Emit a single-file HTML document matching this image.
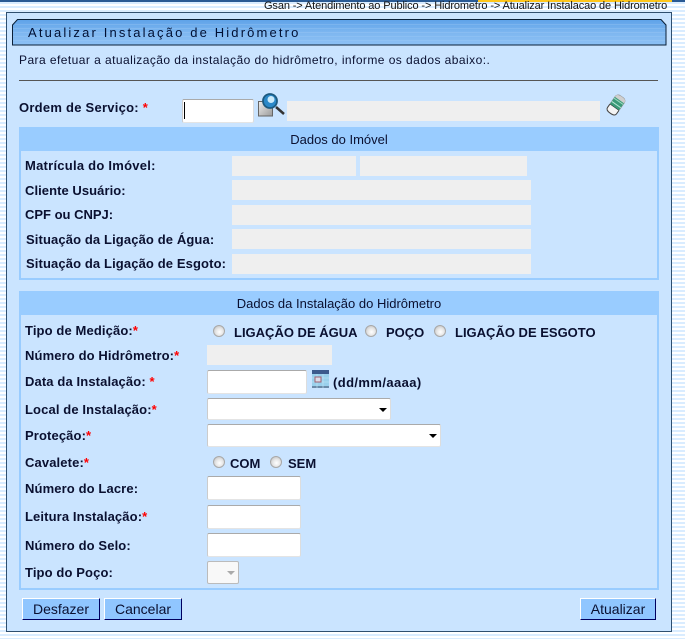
<!DOCTYPE html>
<html><head><meta charset="utf-8"><style>
html,body{margin:0;padding:0}
body{width:685px;height:639px;overflow:hidden;position:relative;background:repeating-linear-gradient(180deg,#fff 0,#fff 2px,#d9ecff 2px,#d9ecff 4px);font-family:"Liberation Sans",Arial,sans-serif;color:#001133}
div,span.t,svg{position:absolute}
.t{white-space:nowrap;font-size:13px;line-height:14px;font-weight:bold;color:#0a1030;margin-top:1px;letter-spacing:.12px}
.n{font-weight:normal}
.r{color:#f00}
.ro{background:#efefef;height:20px}
.in{background:#fff;box-sizing:border-box;border-top:1px solid #aaa;border-left:1px solid #ccc;border-right:1px solid #ddd;border-bottom:1px solid #e4e4e4;border-radius:2px}
.sec{left:19px;width:640px;box-sizing:border-box;border:2px solid #99ccff;border-top:0}
.hd{left:19px;width:640px;height:24px;background:#99ccff;text-align:center;font-size:13px;line-height:25px;color:#0a1030}
.rad{width:12px;height:12px;border-radius:50%;box-sizing:border-box;border:1px solid #a8a8a8;background:radial-gradient(circle at 55% 60%,#fff 0,#e6e6e6 45%,#b8b8b8 100%)}
.btn{height:22px;box-sizing:border-box;background:#90c6ff;border-top:1px solid #fff;border-left:1px solid #fff;border-right:1px solid #000060;border-bottom:1px solid #000060;text-align:center;font-size:14px;line-height:20px;color:#0a1030}
.arr{width:0;height:0;border-left:4px solid transparent;border-right:4px solid transparent;border-top:4px solid #000}
.u{letter-spacing:0}
</style></head><body>
<div style="left:0;top:0;width:685px;height:2px;background:#2a5a94"></div>
<div style="left:478px;top:0;width:194px;height:2px;background:#ffc61a"></div>
<span class="t n" style="left:264px;top:-2px;font-size:11px;letter-spacing:-.12px;color:#111">Gsan -&gt; Atendimento ao Publico -&gt; Hidrometro -&gt; Atualizar Instalacao de Hidrometro</span>

<div style="left:6px;top:12px;width:666px;height:620px;box-sizing:border-box;background:#cae4ff;border:1px solid #2f4f6f"></div>

<svg style="left:12px;top:19px" width="655" height="27" viewBox="0 0 655 27">
<defs><linearGradient id="g" x1="0" y1="0" x2="0" y2="1"><stop offset="0" stop-color="#5ea2e8"/><stop offset=".5" stop-color="#7db6f0"/><stop offset="1" stop-color="#8cc0f4"/></linearGradient></defs>
<path d="M.5 26V6L5.500.5H649L654 6V26Z" fill="url(#g)"/>
<path d="M3 5.500H652M1 9.500H654M1 13.500H654M1 17.500H654M1 21.500H654" stroke="#a8d0f8" stroke-opacity=".28"/>
<path d="M.5 26V6L5.500.5H649L654 6V26Z" fill="none" stroke="#0a2038" stroke-width="1"/>
</svg>
<span class="t n" style="left:28px;top:25px;font-size:13px;letter-spacing:2.15px;color:#001033">Atualizar Instalação de Hidrômetro</span>
<span class="t n" style="left:19px;top:52px;font-size:12px;letter-spacing:.44px;color:#0a1030">Para efetuar a atualização da instalação do hidrômetro, informe os dados abaixo:.</span>
<div style="left:19px;top:80px;width:639px;height:1px;background:#555"></div>

<span class="t" style="left:19px;top:100px;letter-spacing:.25px">Ordem de Serviço: <span class="r">*</span></span>
<div class="in" style="left:182px;top:99px;width:72px;height:24px"></div>
<div style="left:184px;top:102px;width:1px;height:17px;background:#000"></div>
<svg style="left:257px;top:92px" width="29" height="26" viewBox="0 0 29 26">
<defs><linearGradient id="p" x1="0" y1="0" x2="1" y2="1"><stop offset="0" stop-color="#eee"/><stop offset="1" stop-color="#999"/></linearGradient></defs>
<rect x="1.500" y="9.500" width="14" height="14.500" fill="url(#p)" stroke="#666"/>
<path d="M19 15L27 22" stroke="#333" stroke-width="2.500"/>
<circle cx="13" cy="9" r="7" fill="#2a88c8" stroke="#1c5a80" stroke-width="1.800"/>
<circle cx="14" cy="7.500" r="3.500" fill="#cbeafa"/>
</svg>
<div class="ro" style="left:287px;top:101px;width:313px"></div>
<svg style="left:604px;top:92px" width="24" height="26" viewBox="0 0 24 26">
<g transform="rotate(35 12 13)">
<rect x="6.500" y="3" width="11" height="20" rx="3.500" fill="#fff" stroke="#999"/>
<path d="M6.500 6C6.500 4 8 3 12 3C16 3 17.500 4 17.500 6V8H6.500Z" fill="#cfcfcf"/>
<rect x="6.500" y="7" width="11" height="9" fill="#3a9a78"/>
<path d="M6.500 8.500H17.500" stroke="#9ed8c0"/>
<path d="M6.500 12.500H17.500" stroke="#b8e8d4"/>
<path d="M6.500 16H17.500" stroke="#222"/>
<path d="M6.500 16V20C6.500 22 8 23 12 23C16 23 17.500 22 17.500 20V16" fill="#f4f4f4" stroke="#444"/>
</g>
</svg>

<div class="sec" style="top:151px;height:129px"></div>
<div class="hd" style="top:127px">Dados do Imóvel</div>
<span class="t" style="left:25px;top:158px;letter-spacing:.25px">Matrícula do Imóvel:</span>
<span class="t" style="left:25px;top:183px;letter-spacing:.06px">Cliente Usuário:</span>
<span class="t" style="left:25px;top:207px;letter-spacing:0">CPF ou CNPJ:</span>
<span class="t" style="left:26px;top:232px">Situação da Ligação de Água:</span>
<span class="t" style="left:26px;top:256px">Situação da Ligação de Esgoto:</span>
<div class="ro" style="left:232px;top:156px;width:124px"></div>
<div class="ro" style="left:360px;top:156px;width:167px"></div>
<div class="ro" style="left:232px;top:180px;width:299px"></div>
<div class="ro" style="left:232px;top:205px;width:299px"></div>
<div class="ro" style="left:232px;top:229px;width:299px"></div>
<div class="ro" style="left:232px;top:254px;width:299px"></div>

<div class="sec" style="top:315px;height:275px"></div>
<div class="hd" style="top:291px">Dados da Instalação do Hidrômetro</div>
<span class="t" style="left:25px;top:323px">Tipo de Medição:<span class="r">*</span></span>
<div class="rad" style="left:213px;top:325px"></div>
<span class="t u" style="left:234px;top:325px">LIGAÇÃO DE ÁGUA</span>
<div class="rad" style="left:365px;top:325px"></div>
<span class="t u" style="left:386px;top:325px">POÇO</span>
<div class="rad" style="left:434px;top:325px"></div>
<span class="t u" style="left:455px;top:325px">LIGAÇÃO DE ESGOTO</span>

<span class="t" style="left:25px;top:348px">Número do Hidrômetro:<span class="r">*</span></span>
<div class="ro" style="left:207px;top:345px;width:125px"></div>

<span class="t" style="left:25px;top:374px">Data da Instalação: <span class="r">*</span></span>
<div class="in" style="left:207px;top:370px;width:100px;height:24px"></div>
<svg style="left:312px;top:370px" width="17" height="18" viewBox="0 0 17 18">
<rect width="17" height="18" fill="#9ad0ec"/>
<rect width="17" height="4" fill="#3c5a8c"/>
<rect y="16" width="17" height="2" fill="#6a8aa8"/>
<path d="M0 8H17M0 12H17M5 4V18M11 4V18" stroke="#c4e6f6" stroke-width=".6"/>
<rect x="3" y="7" width="6" height="5" fill="#dcdce8" stroke="#a06070"/>
</svg>
<span class="t" style="left:333px;top:375px;font-size:13px;letter-spacing:.4px">(dd/mm/aaaa)</span>

<span class="t" style="left:25px;top:402px">Local de Instalação:<span class="r">*</span></span>
<div class="in" style="left:207px;top:398px;width:184px;height:22px"></div>
<div class="arr" style="left:379px;top:408px"></div>

<span class="t" style="left:25px;top:428px">Proteção:<span class="r">*</span></span>
<div class="in" style="left:207px;top:424px;width:234px;height:23px"></div>
<div class="arr" style="left:429px;top:434px"></div>

<span class="t" style="left:25px;top:455px">Cavalete:<span class="r">*</span></span>
<div class="rad" style="left:213px;top:456px"></div>
<span class="t u" style="left:230px;top:456px">COM</span>
<div class="rad" style="left:270px;top:456px"></div>
<span class="t u" style="left:288px;top:456px">SEM</span>

<span class="t" style="left:25px;top:481px">Número do Lacre:</span>
<div class="in" style="left:207px;top:476px;width:94px;height:24px"></div>
<span class="t" style="left:25px;top:509px">Leitura Instalação:<span class="r">*</span></span>
<div class="in" style="left:207px;top:505px;width:94px;height:24px"></div>
<span class="t" style="left:25px;top:538px">Número do Selo:</span>
<div class="in" style="left:207px;top:533px;width:94px;height:24px"></div>
<span class="t" style="left:25px;top:565px">Tipo do Poço:</span>
<div class="in" style="left:207px;top:561px;width:32px;height:23px;background:#f8f8f8;border:1px solid #bbb"></div>
<div class="arr" style="left:227px;top:571px;border-top-color:#aaa"></div>

<div class="btn" style="left:22px;top:598px;width:78px">Desfazer</div>
<div class="btn" style="left:104px;top:598px;width:78px">Cancelar</div>
<div class="btn" style="left:580px;top:598px;width:76px">Atualizar</div>
</body></html>
